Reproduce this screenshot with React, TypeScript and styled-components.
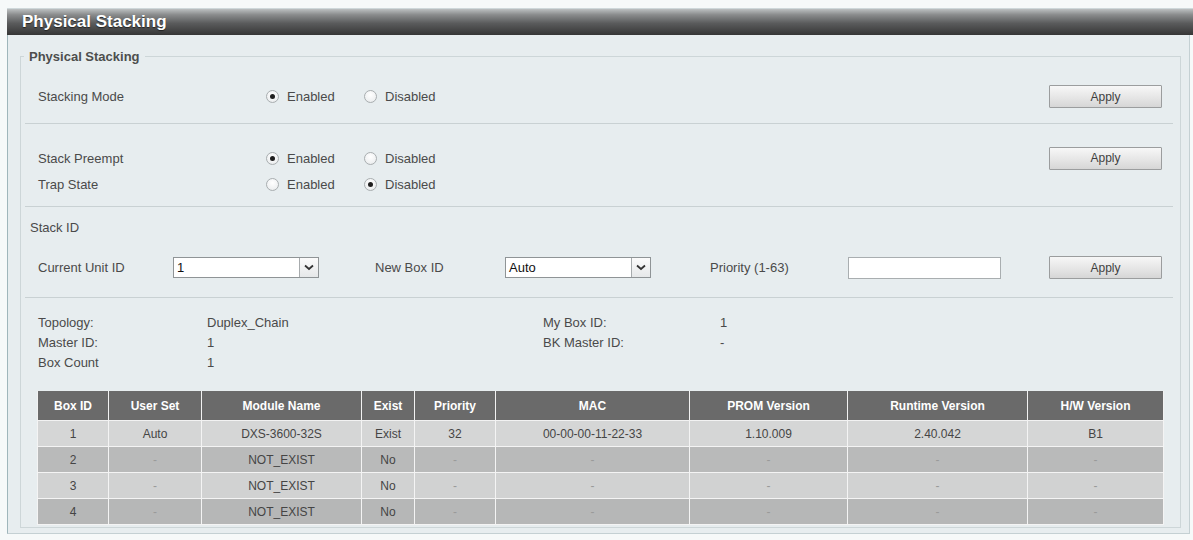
import React from 'react'
import styled, { createGlobalStyle } from 'styled-components'

const GlobalStyle = createGlobalStyle`
  html, body {
    margin: 0;
    padding: 0;
    background: #f6f9f9;
  }
  body {
    font-family: 'Liberation Sans', Arial, sans-serif;
    font-size: 13px;
    color: #4a4a4a;
  }
`

const Page = styled.div`
  padding: 8px 0 0 7px;
  height: 534px;
  box-sizing: border-box;
`

const Panel = styled.div`
  display: flex;
  flex-direction: column;
  height: 100%;
`

const TitleBar = styled.div`
  height: 26px;
  display: flex;
  align-items: center;
  padding-left: 15px;
  background: linear-gradient(#bcc0c1 0%, #8a8c8d 22%, #5a5b5c 55%, #363636 100%);
  border-top: 1px solid #cfd8da;
  color: #fff;
  font-size: 17px;
  font-weight: bold;
  text-shadow: 0 1px 1px #222;
`

const Body = styled.div`
  flex: 1;
  background: #e7edef;
  border-left: 1px solid #9fb6bb;
  border-right: 1px solid #c4d0d3;
  border-bottom: 1px solid #c4d0d3;
  margin-right: 3px;
  padding: 14px 8px 5px 12px;
`

const Fieldset = styled.fieldset`
  margin: 0;
  padding: 0;
  border: 1px solid #cdd6d8;
  height: 479px;
  box-sizing: border-box;
`

const Legend = styled.legend`
  margin-left: 3px;
  padding: 0 5px;
  font-size: 13px;
  font-weight: bold;
  color: #4d4d4d;
`

const Section = styled.div<{ $top: number; $bottom: number }>`
  padding: ${(p) => p.$top}px 11px ${(p) => p.$bottom}px 13px;
  margin: 0 7px 0 4px;
  border-bottom: 1px solid #c9d1d3;
  display: flex;
  align-items: center;

  &:last-child {
    border-bottom: none;
  }
`

const Column = styled.div`
  display: flex;
  flex-direction: column;
  flex: 1;
`

const Row = styled.div<{ $h: number }>`
  display: flex;
  align-items: center;
  height: ${(p) => p.$h}px;
`

const Label = styled.span<{ $w: number }>`
  width: ${(p) => p.$w}px;
  flex-shrink: 0;
`

const SubTitle = styled.div`
  margin-left: -8px;
  height: 20px;
  display: flex;
  align-items: center;
`

const RadioOption = styled.label`
  width: 98px;
  display: flex;
  align-items: center;
  gap: 8px;
`

const Radio = styled.input.attrs({ type: 'radio' })`
  appearance: none;
  margin: 0;
  width: 13px;
  height: 13px;
  border-radius: 50%;
  border: 1px solid #a9aeb0;
  background: radial-gradient(circle at 50% 35%, #ffffff 0%, #eef0f1 70%, #d9dcdd 100%);
  display: grid;
  place-items: center;

  &:checked::after {
    content: '';
    width: 5px;
    height: 5px;
    border-radius: 50%;
    background: #1f1f1f;
  }
`

const ApplyButton = styled.button`
  margin-left: auto;
  width: 113px;
  height: 23px;
  font-family: inherit;
  font-size: 12px;
  color: #3f3f3f;
  border: 1px solid #9b9d9e;
  border-radius: 1px;
  background: linear-gradient(#f7f7f7, #e4e4e4 60%, #d6d6d6);
  padding: 0;
`

const SelectBox = styled.div<{ $w: number }>`
  width: ${(p) => p.$w}px;
  height: 21px;
  box-sizing: border-box;
  display: flex;
  background: #fff;
  border: 1px solid #8f9496;
  color: #111;
  font-size: 13px;
`

const SelectValue = styled.span`
  flex: 1;
  display: flex;
  align-items: center;
  padding-left: 3px;
`

const SelectArrow = styled.span`
  width: 18px;
  display: grid;
  place-items: center;
  border-left: 1px solid #a7abad;
  background: linear-gradient(#fbfbfb, #e6e8e9);
`

const TextInput = styled.input`
  width: 153px;
  height: 22px;
  box-sizing: border-box;
  border: 1px solid #a9aeb0;
  background: #fff;
  margin: 0;
`

const InfoGrid = styled.div`
  display: grid;
  grid-template-columns: 169px 336px 177px 1fr;
  grid-auto-rows: 20px;
  align-items: center;
  margin-left: 17px;
  margin-top: 14px;
`

const Table = styled.table`
  margin: 19px 0 0 16px;
  width: 1126px;
  border-collapse: collapse;
  table-layout: fixed;
  font-size: 12px;
`

const Th = styled.th`
  height: 29px;
  background: #6a6a6a;
  color: #fff;
  font-weight: bold;
  border: 1px solid #f2f2f2;
  border-top: none;
  padding: 0;
`

const Tr = styled.tr<{ $shade: string }>`
  background: ${(p) => p.$shade};
`

const Td = styled.td<{ $faint?: boolean }>`
  height: 25px;
  text-align: center;
  border: 1px solid #f4f4f4;
  padding: 0;
  color: ${(p) => (p.$faint ? '#9a9a9a' : '#454545')};
`

const Chevron = () => (
  <svg width="10" height="7" viewBox="0 0 10 7">
    <path d="M1 1.5 L5 5 L9 1.5" fill="none" stroke="#333" strokeWidth="1.8" />
  </svg>
)

const columns = [
  { title: 'Box ID', w: 71 },
  { title: 'User Set', w: 93 },
  { title: 'Module Name', w: 160 },
  { title: 'Exist', w: 53 },
  { title: 'Priority', w: 81 },
  { title: 'MAC', w: 194 },
  { title: 'PROM Version', w: 158 },
  { title: 'Runtime Version', w: 180 },
  { title: 'H/W Version', w: 136 },
]

const boxes = [
  ['1', 'Auto', 'DXS-3600-32S', 'Exist', '32', '00-00-00-11-22-33', '1.10.009', '2.40.042', 'B1'],
  ['2', '-', 'NOT_EXIST', 'No', '-', '-', '-', '-', '-'],
  ['3', '-', 'NOT_EXIST', 'No', '-', '-', '-', '-', '-'],
  ['4', '-', 'NOT_EXIST', 'No', '-', '-', '-', '-', '-'],
]

const shades = ['#d5d6d6', '#b9baba', '#d1d2d2', '#b6b7b7']

const RadioPair = ({ name, enabled }: { name: string; enabled: boolean }) => (
  <>
    <RadioOption>
      <Radio name={name} defaultChecked={enabled} />
      Enabled
    </RadioOption>
    <RadioOption>
      <Radio name={name} defaultChecked={!enabled} />
      Disabled
    </RadioOption>
  </>
)

const App: React.FC = () => (
  <>
    <GlobalStyle />
    <Page>
      <Panel>
        <TitleBar>Physical Stacking</TitleBar>
        <Body>
          <Fieldset>
            <Legend>Physical Stacking</Legend>

            <Section $top={21} $bottom={15}>
              <Label $w={228}>Stacking Mode</Label>
              <RadioPair name="stacking" enabled />
              <ApplyButton>Apply</ApplyButton>
            </Section>

            <Section $top={21} $bottom={9}>
              <Column>
                <Row $h={26}>
                  <Label $w={228}>Stack Preempt</Label>
                  <RadioPair name="preempt" enabled />
                  <ApplyButton>Apply</ApplyButton>
                </Row>
                <Row $h={26}>
                  <Label $w={228}>Trap State</Label>
                  <RadioPair name="trap" enabled={false} />
                </Row>
              </Column>
            </Section>

            <Section $top={10} $bottom={18}>
              <Column>
                <SubTitle>Stack ID</SubTitle>
                <Row $h={23} style={{ marginTop: 19 }}>
                  <Label $w={135}>Current Unit ID</Label>
                  <SelectBox $w={146}>
                    <SelectValue>1</SelectValue>
                    <SelectArrow>
                      <Chevron />
                    </SelectArrow>
                  </SelectBox>
                  <Label $w={130} style={{ marginLeft: 56 }}>
                    New Box ID
                  </Label>
                  <SelectBox $w={146}>
                    <SelectValue>Auto</SelectValue>
                    <SelectArrow>
                      <Chevron />
                    </SelectArrow>
                  </SelectBox>
                  <Label $w={138} style={{ marginLeft: 59 }}>
                    Priority (1-63)
                  </Label>
                  <TextInput />
                  <ApplyButton>Apply</ApplyButton>
                </Row>
              </Column>
            </Section>

            <div>
              <InfoGrid>
                <span>Topology:</span>
                <span>Duplex_Chain</span>
                <span>My Box ID:</span>
                <span>1</span>
                <span>Master ID:</span>
                <span>1</span>
                <span>BK Master ID:</span>
                <span>-</span>
                <span>Box Count</span>
                <span>1</span>
              </InfoGrid>
              <Table>
                <colgroup>
                  {columns.map((c) => (
                    <col key={c.title} style={{ width: c.w }} />
                  ))}
                </colgroup>
                <thead>
                  <tr>
                    {columns.map((c) => (
                      <Th key={c.title}>{c.title}</Th>
                    ))}
                  </tr>
                </thead>
                <tbody>
                  {boxes.map((row, i) => (
                    <Tr key={row[0]} $shade={shades[i]}>
                      {row.map((cell, j) => (
                        <Td key={j} $faint={cell === '-'}>
                          {cell}
                        </Td>
                      ))}
                    </Tr>
                  ))}
                </tbody>
              </Table>
            </div>
          </Fieldset>
        </Body>
      </Panel>
    </Page>
  </>
)

export default App
